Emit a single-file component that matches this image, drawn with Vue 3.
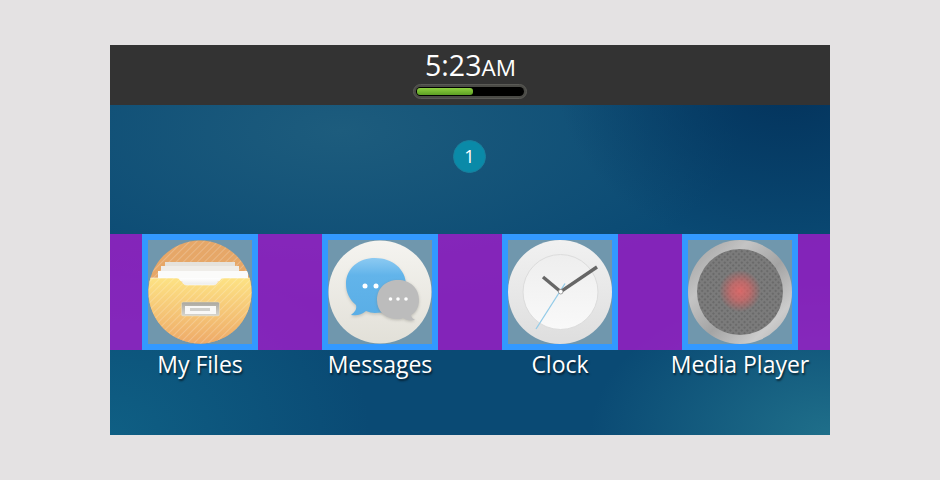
<script setup>
const apps = [
  { id: 'files', label: 'My Files' },
  { id: 'messages', label: 'Messages' },
  { id: 'clock', label: 'Clock' },
  { id: 'media', label: 'Media Player' }
]
</script>

<template>
  <main class="screen">
    <header class="status">
      <div class="time">5:23<span class="ampm">AM</span></div>
      <div class="battery"><div class="track"><div class="fill"></div></div></div>
    </header>
    <div class="pager"><span class="dot">1</span></div>
    <div class="band">
      <div v-for="app in apps" :key="app.id" class="cell">
        <div class="tile">
          <svg v-if="app.id === 'files'" viewBox="0 0 104 104" width="104" height="104">
            <defs>
              <pattern id="st" width="5" height="5" patternUnits="userSpaceOnUse" patternTransform="rotate(45)">
                <rect width="1" height="5" fill="#fff" opacity=".2" />
              </pattern>
              <linearGradient id="fold" x1="0" y1="0" x2="0" y2="1">
                <stop offset="0" stop-color="#fde283" />
                <stop offset=".4" stop-color="#f7cc7a" />
                <stop offset="1" stop-color="#eeaa68" />
              </linearGradient>
              <linearGradient id="sheet" x1="0" y1="0" x2="0" y2="1">
                <stop offset="0" stop-color="#ffffff" />
                <stop offset="1" stop-color="#ececea" />
              </linearGradient>
              <linearGradient id="grip" x1="0" y1="0" x2="0" y2="1">
                <stop offset="0" stop-color="#a9a79f" />
                <stop offset="1" stop-color="#d8d6cf" />
              </linearGradient>
              <clipPath id="disc"><circle cx="52" cy="52" r="51.500" /></clipPath>
            </defs>
            <g clip-path="url(#disc)">
              <rect width="104" height="104" fill="#e6a768" />
              <rect width="104" height="104" fill="url(#st)" />
              <rect x="17" y="22" width="70" height="8" fill="#e5e2dc" />
              <rect x="13" y="26" width="78" height="8" fill="#efede9" />
              <rect x="10" y="31" width="90" height="10" fill="#fbfbfa" />
              <path d="M0 38H29Q31 38 32 40L35 43Q36 45 38 45H66Q68 45 69 43L72 40Q73 38 75 38H104V104H0Z" fill="url(#fold)" />
              <path d="M0 38H29Q31 38 32 40L35 43Q36 45 38 45H66Q68 45 69 43L72 40Q73 38 75 38H104V104H0Z" fill="url(#st)" />
              <path d="M32 38H72L69 43Q68 45 66 45H38Q36 45 35 43Z" fill="url(#sheet)" />
              <path d="M0 38H29Q31 38 32 40L35 43Q36 45 38 45H66Q68 45 69 43L72 40Q73 38 75 38H104" fill="none" stroke="#fff" stroke-opacity=".55" />
            </g>
            <rect x="33.500" y="62" width="38" height="14" rx="1.500" fill="url(#grip)" stroke="#f3e3b8" stroke-opacity=".5" />
            <rect x="37" y="66" width="31" height="8" fill="#f8f8f6" />
            <rect x="42" y="68" width="20" height="3" fill="#d0d0cc" />
          </svg>

          <svg v-else-if="app.id === 'messages'" viewBox="0 0 104 104" width="104" height="104">
            <defs>
              <linearGradient id="blue" x1="0" y1="0" x2="0" y2="1">
                <stop offset="0" stop-color="#8ccaf2" />
                <stop offset=".3" stop-color="#62b4ea" />
                <stop offset="1" stop-color="#5aaee6" />
              </linearGradient>
              <linearGradient id="face" x1="0" y1="0" x2="0" y2="1">
                <stop offset="0" stop-color="#f5f4f0" />
                <stop offset="1" stop-color="#e2e0d8" />
              </linearGradient>
              <filter id="soft" x="-20%" y="-20%" width="140%" height="140%"><feGaussianBlur stdDeviation="1.500" /></filter>
            </defs>
            <circle cx="52" cy="52" r="51.500" fill="url(#face)" />
            <path d="M18 44C18 28 31 18 47 18C64 18 78 29 78 45C78 62 64 73 47 73C44 73 41 72 38 71C33 75 29 76 23 75C27 72 29 69 28 65C22 60 18 53 18 44Z" fill="#8b8b80" opacity=".4" filter="url(#soft)" transform="translate(0 1.500)" />
            <path d="M18 44C18 28 31 18 47 18C64 18 78 29 78 45C78 62 64 73 47 73C44 73 41 72 38 71C33 75 29 76 23 75C27 72 29 69 28 65C22 60 18 53 18 44Z" fill="url(#blue)" />
            <circle cx="37" cy="46" r="2.500" fill="#fff" />
            <circle cx="48" cy="46" r="2.500" fill="#fff" />
            <path d="M49 60C49 48 58 40 70 40C82 40 91 48 91 60C91 68 87 73 83 75C83 77 85 79 87 80C82 81 78 80 75 78C73 79 72 79 70 79C58 79 49 72 49 60Z" fill="#77776e" opacity=".4" filter="url(#soft)" transform="translate(0 1)" />
            <path d="M49 60C49 48 58 40 70 40C82 40 91 48 91 60C91 68 87 73 83 75C83 77 85 79 87 80C82 81 78 80 75 78C73 79 72 79 70 79C58 79 49 72 49 60Z" fill="#bcbcbc" />
            <circle cx="62.500" cy="59" r="1.800" fill="#fff" />
            <circle cx="70" cy="59" r="1.800" fill="#fff" />
            <circle cx="78" cy="59" r="1.800" fill="#fff" />
          </svg>

          <svg v-else-if="app.id === 'clock'" viewBox="0 0 104 104" width="104" height="104">
            <defs>
              <linearGradient id="rim" x1="0" y1="0" x2="0" y2="1">
                <stop offset="0" stop-color="#f1f1f1" />
                <stop offset="1" stop-color="#dedede" />
              </linearGradient>
              <linearGradient id="inner" x1="0" y1="0" x2="0" y2="1">
                <stop offset="0" stop-color="#eeeeee" />
                <stop offset="1" stop-color="#f9f9f9" />
              </linearGradient>
            </defs>
            <circle cx="52" cy="52" r="52" fill="url(#rim)" />
            <circle cx="52.500" cy="52" r="37.500" fill="url(#inner)" stroke="#dcdcdc" />
            <path d="M57 43.500L28 89" stroke="#93cbe8" stroke-width="1.300" />
            <path d="M52.700 51.700L89 27" stroke="#666" stroke-width="3.400" />
            <path d="M52.700 51.700L35 37" stroke="#666" stroke-width="3.400" />
            <circle cx="52.700" cy="51.700" r="2.300" fill="#fff" stroke="#8a8a8a" stroke-width=".8" />
          </svg>

          <svg v-else viewBox="0 0 104 104" width="104" height="104">
            <defs>
              <linearGradient id="metal" x1="0" y1="0" x2="1" y2="1">
                <stop offset="0" stop-color="#9c9c9c" />
                <stop offset=".3" stop-color="#c4c4c4" />
                <stop offset=".55" stop-color="#a4a4a4" />
                <stop offset=".8" stop-color="#cccccc" />
                <stop offset="1" stop-color="#adadad" />
              </linearGradient>
              <pattern id="mesh" width="4" height="4" patternUnits="userSpaceOnUse" patternTransform="rotate(45)">
                <rect width="4" height="4" fill="#7b7b7b" />
                <circle cx="2" cy="2" r="1.100" fill="#666" />
              </pattern>
              <radialGradient id="glow">
                <stop offset="0" stop-color="#ff6464" stop-opacity=".72" />
                <stop offset=".45" stop-color="#f46060" stop-opacity=".55" />
                <stop offset="1" stop-color="#e85050" stop-opacity="0" />
              </radialGradient>
            </defs>
            <circle cx="52" cy="52" r="52" fill="url(#metal)" />
            <circle cx="52" cy="52" r="43" fill="url(#mesh)" />
            <circle cx="52" cy="51" r="21" fill="url(#glow)" />
          </svg>
        </div>
        <div class="label">{{ app.label }}</div>
      </div>
    </div>
  </main>
</template>

<style>
body { background: #e4e2e3; }
</style>

<style scoped>
.screen {
  width: 720px;
  height: 390px;
  margin: 45px auto 0;
  display: flex;
  flex-direction: column;
  font-family: "Open Sans", "Noto Sans", sans-serif;
  color: #fff;
  background:
    radial-gradient(240px 150px at 100% 100%, #1f6f8a 0%, rgba(31, 111, 138, 0) 100%),
    radial-gradient(260px 200px at 0% 100%, #0f5f84 0%, rgba(15, 95, 132, 0) 100%),
    radial-gradient(230px 180px at 94% 8%, #03325b 0%, rgba(3, 50, 91, 0) 100%),
    radial-gradient(400px 170px at 32% 22%, #1d5c7d 0%, rgba(29, 92, 125, 0) 100%),
    #0a4a74;
}
.status {
  height: 60px;
  flex: none;
  background: #333333;
  display: flex;
  flex-direction: column;
  align-items: center;
}
.time {
  font-size: 28.500px;
  line-height: 40px;
  height: 39px;
  padding-left: 1px;
}
.ampm { font-size: 22.500px; }
.battery {
  width: 114px;
  height: 15px;
  box-sizing: border-box;
  padding: 2px;
  border-radius: 8px;
  background: #4a4a46;
  border: 1px solid #5a5a56;
}
.track {
  height: 100%;
  border-radius: 5px;
  background: #000;
  padding: 1px;
  box-sizing: border-box;
}
.fill {
  width: 56px;
  height: 100%;
  border-radius: 3px;
  background: linear-gradient(#8ed040, #5c9f24);
}
.pager {
  height: 129px;
  flex: none;
  box-sizing: border-box;
  padding-top: 35px;
  display: flex;
  justify-content: center;
}
.dot {
  width: 33px;
  height: 33px;
  margin-left: -1px;
  border-radius: 50%;
  background: #0a8aa8;
  border: 1px solid #1a7f9c;
  box-sizing: border-box;
  font-size: 18px;
  line-height: 31px;
  text-align: center;
}
.band {
  display: grid;
  grid-template-columns: repeat(4, 180px);
  height: 116px;
  background: rgba(172, 24, 208, 0.75);
}
.cell {
  display: flex;
  flex-direction: column;
  align-items: center;
}
.tile {
  width: 116px;
  height: 116px;
  flex: none;
  box-sizing: border-box;
  border: 6px solid #3399ff;
  background: #7097ad;
}
.tile svg { display: block; }
.label {
  font-size: 23px;
  line-height: 30px;
  margin-top: -1px;
  white-space: nowrap;
  text-shadow: 1px 2px 2px rgba(0, 0, 0, 0.6);
}
</style>
